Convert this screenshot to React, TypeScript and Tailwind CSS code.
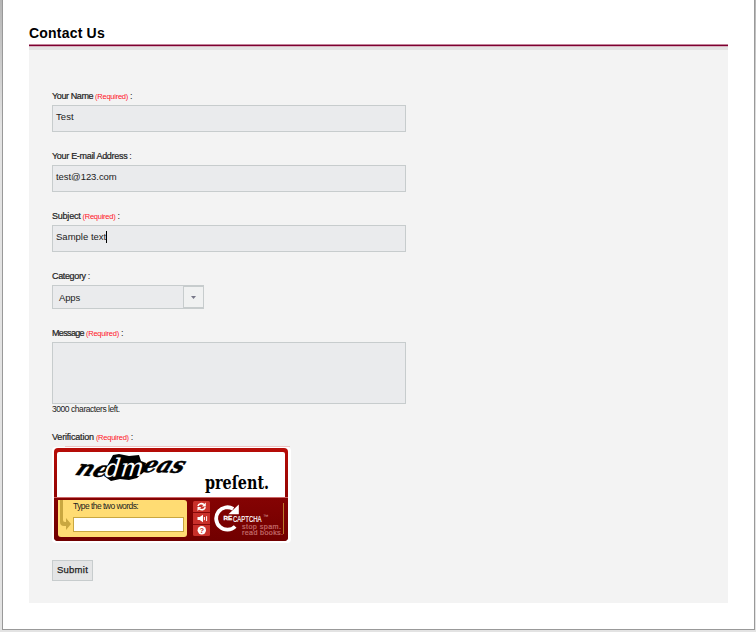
import type { ReactNode } from 'react';

function Label({ text, tracking, required }: { text: string; tracking: string; required?: boolean }) {
  return (
    <div className="flex h-[12px] items-baseline whitespace-pre text-[9px] leading-[12px] text-[#222]">
      <span className={`[-webkit-text-stroke:0.2px_#222] ${tracking}`}>{text}</span>
      {required && <span className="ml-[2px] text-[7.5px] tracking-[-0.25px] text-[#ff1428]">(Required)</span>}
      <span className="ml-[2px]">:</span>
    </div>
  );
}

function Field({ children }: { children: ReactNode }) {
  return (
    <div className="mt-[3px] flex h-[27px] w-[354px] items-start border border-[#c7cccd] bg-[#eaebed] pl-[3px] pt-[5px] text-[9.5px] leading-[12px] text-[#222]">
      {children}
    </div>
  );
}

function CaptchaWords() {
  return (
    <svg width="227" height="45" viewBox="57 452 227 45" className="block">
      <defs>
        <clipPath id="blot">
          <path d="M107 466l6-11 6-1 10 2 10-1 2 6 5 2-2 9-7 6-8 2-9-1-9 2-7-5z" />
        </clipPath>
      </defs>
      <g fontFamily="'DejaVu Serif', serif" fontWeight="bold" fontStyle="italic">
        <text transform="translate(74 475) rotate(4) skewX(-22)" fontSize="22" stroke="#000" strokeWidth=".4" textLength="32" lengthAdjust="spacingAndGlyphs">ne</text>
        <text transform="translate(141 472) rotate(1) skewX(-22)" fontSize="22" stroke="#000" strokeWidth=".5" textLength="41" lengthAdjust="spacingAndGlyphs">eas</text>
        <path d="M107 466l6-11 6-1 10 2 10-1 2 6 5 2-2 9-7 6-8 2-9-1-9 2-7-5z" />
        <g clipPath="url(#blot)" fill="#fff">
          <text transform="translate(104 477) rotate(-2) skewX(-8)" fontSize="25" fontWeight="normal" textLength="39" lengthAdjust="spacingAndGlyphs">dm</text>
        </g>
      </g>
      <text x="205" y="489" fontFamily="'DejaVu Serif', serif" fontWeight="bold" fontSize="18" textLength="64" lengthAdjust="spacingAndGlyphs">preſent.</text>
    </svg>
  );
}

function CaptchaLogo() {
  return (
    <svg width="74" height="42" viewBox="212 498 74 42" className="ml-[2px] block">
      <path d="M235.5 508.6A11.2 11.2 0 1 0 237.5 526.2" fill="none" stroke="#fff" strokeWidth="3.8" transform="translate(-2.3 .3)" />
      <path d="M238.8 504.5v9.8h-10.4z" fill="#fff" />
      <g fontFamily="'Liberation Sans', sans-serif">
        <text x="223.5" y="520.2" fontSize="5.5" fontWeight="bold" fill="#fff" stroke="#fff" strokeWidth=".3" textLength="8.6" lengthAdjust="spacingAndGlyphs">RE</text>
        <text x="233" y="521.5" fontSize="9.5" fill="#fff" stroke="#fff" strokeWidth=".2" textLength="28.5" lengthAdjust="spacingAndGlyphs">CAPTCHA</text>
        <text x="263" y="518" fontSize="5" fill="#dba5a5" textLength="5.5" lengthAdjust="spacingAndGlyphs">™</text>
        <text x="242" y="528.6" fontSize="7.2" fill="#c46d6d" stroke="#c46d6d" strokeWidth=".2" textLength="39">stop spam.</text>
        <text x="242" y="534.8" fontSize="7.2" fill="#c46d6d" stroke="#c46d6d" strokeWidth=".2" textLength="41">read books.</text>
      </g>
      <path d="M283.5 503v31" stroke="#bd7a2c" />
    </svg>
  );
}

function CaptchaButtons() {
  return (
    <svg width="17" height="35" viewBox="0 0 17 35" className="ml-[6px] mt-[3px] block">
      <rect width="17" height="35" rx="1.5" fill="#c9302a" />
      <path d="M0 11.5h17M0 23.5h17" stroke="#850808" />
      <g fill="none" stroke="#fff" strokeWidth="1.6">
        <path d="M5 5.2C5.6 2.4 9 2 11 3.7M12.2 6.2C11.6 9 8.3 9.4 6.4 7.8" />
        <path d="M11.4 16v3.2M13.6 15.2v4.8" strokeWidth="1" />
      </g>
      <path d="M12.8 1.4v4H8.9zM4.5 10.1v-4h3.8zM4.5 16h2.2L10 13.7v7.6L6.7 19H4.5z" fill="#fff" />
      <circle cx="8.8" cy="29.3" r="4.2" fill="#fff" />
      <text x="8.8" y="32" textAnchor="middle" fontFamily="'Liberation Sans', sans-serif" fontWeight="bold" fontSize="7.5" fill="#c9302a">?</text>
    </svg>
  );
}

function Captcha() {
  return (
    <div className="mt-[3px] w-[239px]">
      <div className="ml-[13px] h-px w-[225px] bg-[#efc5c5]" />
      <div className="h-[96px] rounded-[4px] bg-white pl-[2px] pt-px">
        <div className="h-[93px] w-[234px] overflow-hidden rounded-[4px] bg-linear-to-b from-[#b70d08] from-0% to-[#730000] to-100% px-[3px] pt-[4px]">
          <div className="h-[45px] w-[228px] rounded-t-[2px] bg-white">
            <CaptchaWords />
          </div>
          <div className="-mx-[3px] flex h-[44px] border-t border-[#c66] bg-linear-to-b from-[#850303] to-[#710000] pl-[4px]">
            <div className="mt-[2px] h-[37px] w-[129px] shrink-0 rounded-r-[3px] rounded-bl-[3px] bg-[#ffdc73]">
              <div className="flex">
                <svg width="15" height="36" viewBox="0 0 15 36" className="block shrink-0">
                  <path d="M2 0h3v20q0 2 2 2h1v-4l5 6-5 6v-4H6q-4 0-4-4z" fill="#c9a740" />
                </svg>
                <div>
                  <div className="mt-px h-[12px] whitespace-nowrap text-[8.5px] leading-[11px] tracking-[-0.55px] text-[#222]">Type the two words:</div>
                  <div className="mt-[4px] h-[15px] w-[111px] border border-[#c9a740] bg-white" />
                </div>
              </div>
            </div>
            <CaptchaButtons />
            <CaptchaLogo />
          </div>
        </div>
      </div>
    </div>
  );
}

export default function App() {
  return (
    <div className="flex h-[632px] w-[756px] bg-[#e1e1e1] bg-linear-to-b from-[#b5b5b5] from-0% to-[#e3e3e3] to-20% pl-[2px] font-['Liberation_Sans',Arial,sans-serif]">
      <main className="h-[630px] w-[753px] border-x border-b border-[#999] bg-white pl-[26px]">
        <h1 className="h-[44px] pt-[24px] text-[14px] font-bold leading-[18px] tracking-[0.2px] text-black">Contact Us</h1>
        <div className="w-[699px]">
          <div className="h-px bg-[#c28399]" />
          <div className="h-px bg-[#7d0030]" />
          <div className="h-px bg-[#d8b4c1]" />
          <div className="h-[3px] bg-[#e3e3e3]" />
          <form className="h-[553px] bg-[#f3f3f3] pl-[23px] pt-[40px]">
            <Label text="Your Name" tracking="tracking-[-0.4px]" required />
            <Field>
              <span className="tracking-[0.1px]">Test</span>
            </Field>
            <div className="h-[18px]" />
            <Label text="Your E-mail Address" tracking="tracking-[-0.31px]" />
            <Field>
              <span className="tracking-[-0.06px]">test@123.com</span>
            </Field>
            <div className="h-[18px]" />
            <Label text="Subject" tracking="tracking-[-0.22px]" required />
            <Field>
              <span className="tracking-[0.01px]">Sample text</span>
              <span className="h-[12px] w-px bg-black" />
            </Field>
            <div className="h-[18px]" />
            <Label text="Category" tracking="tracking-[-0.35px]" />
            <div className="mt-[3px] flex h-[24px] w-[152px] border border-[#c7cccd] bg-[#eaebed]">
              <span className="w-[130px] pl-[6px] pt-[6px] text-[9.5px] leading-[12px] tracking-[-0.15px] text-[#222]">Apps</span>
              <span className="flex w-[20px] items-center justify-center border border-r-0 border-[#c7cccd] bg-[#f0f1f1]">
                <svg width="5" height="3" viewBox="0 0 5 3">
                  <path d="M0 0h5L2.5 3z" fill="#778" />
                </svg>
              </span>
            </div>
            <div className="h-[18px]" />
            <Label text="Message" tracking="tracking-[-0.65px]" required />
            <div className="mt-[3px] h-[62px] w-[354px] border border-[#c7cccd] bg-[#eaebed]" />
            <div className="h-[27px] text-[8.5px] leading-[11px] tracking-[-0.45px] text-[#222]">3000 characters left.</div>
            <Label text="Verification" tracking="tracking-[-0.18px]" required />
            <Captcha />
            <div className="mt-[17px] flex h-[21px] w-[41px] items-center justify-center border border-[#c7cccd] bg-[#e4e5e6] text-[9.5px] tracking-[0.25px] text-[#222] [-webkit-text-stroke:0.25px_#222]">
              Submit
            </div>
          </form>
        </div>
      </main>
    </div>
  );
}
